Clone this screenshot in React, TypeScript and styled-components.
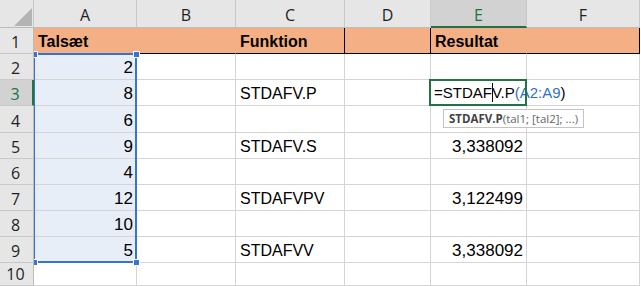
import React from "react";
import styled, { createGlobalStyle, css } from "styled-components";

const GRID = "#d4d4d4";
const HEAD_BG = "#e6e6e6";
const HEAD_LINE = "#c9c9c9";
const BAND = "#f4b084";
const SEL_BG = "#e8eef8";
const BLUE = "#3873cc";
const GREEN = "#217346";

const GlobalStyle = createGlobalStyle`
  *, *::before, *::after { box-sizing: border-box; }
  html, body { margin: 0; padding: 0; background: #fff; }
  body { font-family: "Liberation Sans", Arial, sans-serif; }
`;

const Sheet = styled.div`
  position: relative;
  width: 641px;
  height: 286px;
  overflow: hidden;
  background: #fff;
`;

const Grid = styled.div`
  display: grid;
  grid-template-columns: 34px 103px 99px 109px 86px 96px 113px;
  grid-template-rows: 28px 26px 26px 26px 27px repeat(5, 26px) 23px;
`;

const headBase = css`
  position: relative;
  z-index: 2;
  background: ${HEAD_BG};
  font-family: "Open Sans", "Noto Sans", sans-serif;
  font-size: 16px;
  color: #1f1f1f;
  display: flex;
  justify-content: center;
`;

const Corner = styled.div`
  ${headBase};
  align-items: flex-end;
  justify-content: flex-end;
  padding: 0 1px 1px 0;
  border-right: 1px solid ${HEAD_LINE};
  border-bottom: 1px solid #bcbcbc;
  &::after {
    content: "";
    border-left: 18px solid transparent;
    border-bottom: 18px solid #b4b4b4;
  }
`;

const ColHeader = styled.div<{ $active?: boolean }>`
  ${headBase};
  align-items: center;
  padding-top: 3px;
  border-right: 1px solid ${HEAD_LINE};
  border-bottom: 1px solid #bcbcbc;
  ${(p) =>
    p.$active &&
    css`
      background: #d2d2d2;
      color: ${GREEN};
      border-bottom: 2px solid ${GREEN};
    `}
`;

const RowHeader = styled.div<{ $active?: boolean }>`
  ${headBase};
  align-items: flex-end;
  padding: 0 2px 1px 0;
  line-height: 20px;
  border-right: 1px solid #bcbcbc;
  border-bottom: 1px solid ${HEAD_LINE};
  ${(p) =>
    p.$active &&
    css`
      background: #d2d2d2;
      color: ${GREEN};
      border-right: 2px solid ${GREEN};
    `}
`;

type Fill = "band" | "sel" | undefined;

const Cell = styled.div<{
  $fill?: Fill;
  $right?: string;
  $bottom?: string;
  $align?: "left" | "right";
  $bold?: boolean;
  $num?: boolean;
}>`
  display: flex;
  align-items: flex-end;
  justify-content: ${(p) => (p.$align === "right" ? "flex-end" : "flex-start")};
  padding: 0 ${(p) => (p.$align === "right" ? "3px" : "4px")} 3px;
  white-space: nowrap;
  font-size: ${(p) => (p.$num ? 17 : 16)}px;
  font-weight: ${(p) => (p.$bold ? 700 : 400)};
  line-height: 16px;
  color: #000;
  background: ${(p) => (p.$fill === "band" ? BAND : p.$fill === "sel" ? SEL_BG : "#fff")};
  border-right: 1px solid ${(p) => p.$right ?? GRID};
  border-bottom: 1px solid ${(p) => p.$bottom ?? GRID};
`;

const ActiveCell = styled(Cell)`
  position: relative;
  z-index: 3;
  font-size: 15px;
  padding-left: 3px;
  &::after {
    content: "";
    position: absolute;
    top: -1px;
    left: -2px;
    right: -1px;
    bottom: -1px;
    border: 2px solid ${GREEN};
    pointer-events: none;
  }
`;

const Ref = styled.span`
  color: #2f72c9;
`;

const Caret = styled.span`
  display: inline-block;
  width: 0;
  height: 19px;
  border-left: 1px solid #000;
  margin-right: -1px;
  vertical-align: -4px;
`;

const Tooltip = styled.div`
  position: absolute;
  left: 12px;
  top: 29px;
  height: 19px;
  padding: 0 5px;
  display: flex;
  align-items: center;
  background: #fff;
  border: 1px solid #c3c3c3;
  font-family: "Open Sans", "Noto Sans", sans-serif;
  font-size: 11.5px;
  color: #666;
  white-space: nowrap;
  b {
    font-weight: 700;
    color: #444;
  }
`;

const Selection = styled.div`
  position: absolute;
  left: 33px;
  top: 53px;
  width: 104px;
  height: 210px;
  border: 2px solid ${BLUE};
  z-index: 1;
  pointer-events: none;
`;

const Handle = styled.span<{ $v: "top" | "bottom"; $h: "left" | "right" }>`
  position: absolute;
  width: 7px;
  height: 7px;
  background: ${BLUE};
  border: 1px solid #fff;
  ${(p) => (p.$v === "top" ? "top: -4px;" : "bottom: -5px;")}
  ${(p) => (p.$h === "left" ? "left: -4px;" : "right: -5px;")}
`;

const COLS = ["A", "B", "C", "D", "E", "F"];

type Row = { a?: string; c?: string; e?: string };

const rows: Row[] = [
  { a: "Talsæt", c: "Funktion", e: "Resultat" },
  { a: "2" },
  { a: "8", c: "STDAFV.P" },
  { a: "6" },
  { a: "9", c: "STDAFV.S", e: "3,338092" },
  { a: "4" },
  { a: "12", c: "STDAFVPV", e: "3,122499" },
  { a: "10" },
  { a: "5", c: "STDAFVV", e: "3,338092" },
  {},
];

function BandRow({ row }: { row: Row }) {
  const rights = [BAND, BAND, "#000", "#000", BAND, "#000"];
  return (
    <>
      <RowHeader>1</RowHeader>
      {COLS.map((col, i) => {
        const text = col === "A" ? row.a : col === "C" ? row.c : col === "E" ? row.e : "";
        return (
          <Cell key={col} $fill="band" $bold $right={rights[i]} $bottom="#000">
            {text}
          </Cell>
        );
      })}
    </>
  );
}

function DataRow({ row, n }: { row: Row; n: number }) {
  const inRange = n >= 2 && n <= 9;
  return (
    <>
      <RowHeader $active={n === 3}>{n}</RowHeader>
      <Cell $fill={inRange ? "sel" : undefined} $align="right" $num>
        {row.a}
      </Cell>
      <Cell />
      <Cell>{row.c}</Cell>
      <Cell />
      {n === 3 ? (
        <ActiveCell>
          <span>
            =STDAF
            <Caret />
            V.P<Ref>(A2:A9</Ref>)
          </span>
          <Tooltip>
            <b>STDAFV.P</b>(tal1; [tal2]; ...)
          </Tooltip>
        </ActiveCell>
      ) : (
        <Cell $align="right" $num>
          {row.e}
        </Cell>
      )}
      <Cell />
    </>
  );
}

export default function App() {
  return (
    <Sheet>
      <GlobalStyle />
      <Grid>
        <Corner />
        {COLS.map((c) => (
          <ColHeader key={c} $active={c === "E"}>
            {c}
          </ColHeader>
        ))}
        {rows.map((row, i) =>
          i === 0 ? <BandRow key={i} row={row} /> : <DataRow key={i} row={row} n={i + 1} />
        )}
      </Grid>
      <Selection>
        <Handle $v="top" $h="left" />
        <Handle $v="top" $h="right" />
        <Handle $v="bottom" $h="left" />
        <Handle $v="bottom" $h="right" />
      </Selection>
    </Sheet>
  );
}
